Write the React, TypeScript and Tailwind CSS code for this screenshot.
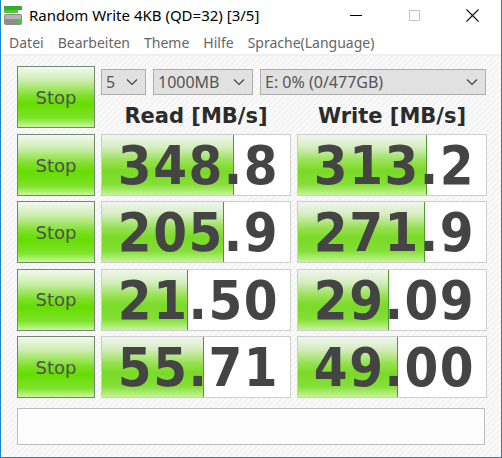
import React from 'react'

type Row = { read: string; readFill: number; write: string; writeFill: number }

const rows: Row[] = [
  { read: '348.8', readFill: 132, write: '313.2', writeFill: 129 },
  { read: '205.9', readFill: 122, write: '271.9', writeFill: 127 },
  { read: '21.50', readFill: 86, write: '29.09', writeFill: 91 },
  { read: '55.71', readFill: 102, write: '49.00', writeFill: 100 },
]

const menu = ['Datei', 'Bearbeiten', 'Theme', 'Hilfe', 'Sprache(Language)']

const AppIcon = () => (
  <svg width="20" height="20" viewBox="0 0 20 20">
    <rect x="0" y="0" width="18" height="4" fill="#2fae2f" />
    <rect x="0" y="4" width="14" height="3" fill="#5fbf3f" />
    <rect x="0" y="8" width="18" height="11" rx="2" fill="#8c8c8c" />
    <rect x="1" y="9" width="16" height="4" rx="1" fill="#b4b4b4" />
    <rect x="14" y="13" width="3" height="4" fill="#3ccf3c" />
  </svg>
)

const Chevron = () => (
  <svg width="12" height="8" viewBox="0 0 12 8">
    <polyline points="1,1.5 6,6.5 11,1.5" fill="none" stroke="#444" strokeWidth="1.2" />
  </svg>
)

const StopButton = () => (
  <button className="w-[78px] h-[62px] shrink-0 border border-[#74876f] bg-[linear-gradient(to_bottom,#f4f8f1_0%,#cdeeb0_22%,#7ee02a_48%,#66dd00_62%,#7ee32a_85%,#c8f79c_100%)] text-[18px] text-[#505050] font-['DejaVu_Sans',sans-serif] flex items-center justify-center">
    Stop
  </button>
)

const Result = (props: { value: string; fill: number }) => (
  <div className="relative w-[190px] h-[62px] shrink-0 border border-[#cdcdcd] bg-white overflow-hidden">
    <div
      className="absolute left-0 top-0 bottom-0 border-r border-[#4f9a2c] bg-[linear-gradient(to_bottom,#f1f5ee_0%,#d6eec2_20%,#93e04c_45%,#7ada27_60%,#84df36_82%,#c6f598_100%)]"
      style={{ width: props.fill }}
    />
    <div className="relative h-full flex items-center justify-end pr-[11px] pt-[2px] text-[54px] tracking-[1.5px] font-bold text-[#444] leading-none font-['DejaVu_Sans_Condensed','DejaVu_Sans',sans-serif]">
      {props.value}
    </div>
  </div>
)

const Select = (props: { label: string; width: string }) => (
  <div
    className={`${props.width} h-[26px] shrink-0 border border-[#adadad] bg-[#e1e1e1] flex items-center justify-between pl-[4px] pr-[7px] text-[16px] text-[#555] font-['Noto_Sans',sans-serif]`}
  >
    <span>{props.label}</span>
    <Chevron />
  </div>
)

export default function App() {
  return (
    <div className="w-[502px] h-[458px] flex flex-col border-x border-b border-[#1883d7] bg-white font-['Noto_Sans',sans-serif] overflow-hidden">
      <div className="h-[31px] flex items-center shrink-0">
        <div className="pl-[3px] pt-[1px] w-[28px]">
          <AppIcon />
        </div>
        <span className="text-[15px] text-black">Random Write 4KB (QD=32) [3/5]</span>
        <div className="ml-auto flex h-full">
          <div className="w-[58px] flex items-center justify-center">
            <div className="w-[12px] h-px bg-black" />
          </div>
          <div className="w-[58px] flex items-center justify-center">
            <div className="w-[11px] h-[11px] border border-[#c4c4c4]" />
          </div>
          <div className="w-[58px] flex items-center justify-center">
            <svg width="13" height="13" viewBox="0 0 13 13">
              <path d="M0.5 0.5 L12.5 12.5 M12.5 0.5 L0.5 12.5" stroke="#111" strokeWidth="1.1" />
            </svg>
          </div>
        </div>
      </div>
      <div className="h-[25px] flex items-center gap-[14px] pl-[8px] text-[14px] text-[#666] shrink-0 border-b-2 border-[#f0f0f0]">
        {menu.map((m) => (
          <span key={m}>{m}</span>
        ))}
      </div>
      <div className="flex-1 flex flex-col pl-[16px] pt-[10px] bg-[repeating-linear-gradient(135deg,#f2f2f2_0px,#f2f2f2_1.5px,#fafafa_1.5px,#fafafa_4px)]">
        <div className="flex gap-[6px] h-[62px] mb-[6px]">
          <StopButton />
          <div className="flex flex-col">
            <div className="flex gap-[7px] mt-[3px]">
              <Select label="5" width="w-[45px]" />
              <Select label="1000MB" width="w-[100px]" />
              <Select label="E: 0% (0/477GB)" width="w-[226px]" />
            </div>
            <div className="flex gap-[6px] mt-[11px] h-[21px] leading-[21px] text-[21px] font-bold text-[#2b2b2b] font-['DejaVu_Sans',sans-serif]">
              <div className="w-[190px] text-center">Read [MB/s]</div>
              <div className="w-[190px] text-center">Write [MB/s]</div>
            </div>
          </div>
        </div>
        <div className="flex flex-col gap-[5.4px]">
          {rows.map((r, i) => (
            <div key={i} className="flex gap-[6px]">
              <StopButton />
              <Result value={r.read} fill={r.readFill} />
              <Result value={r.write} fill={r.writeFill} />
            </div>
          ))}
        </div>
        <div className="mt-[10px] w-[468px] h-[37px] border border-[#bdbdbd] bg-[#fdfdfd]" />
      </div>
    </div>
  )
}
